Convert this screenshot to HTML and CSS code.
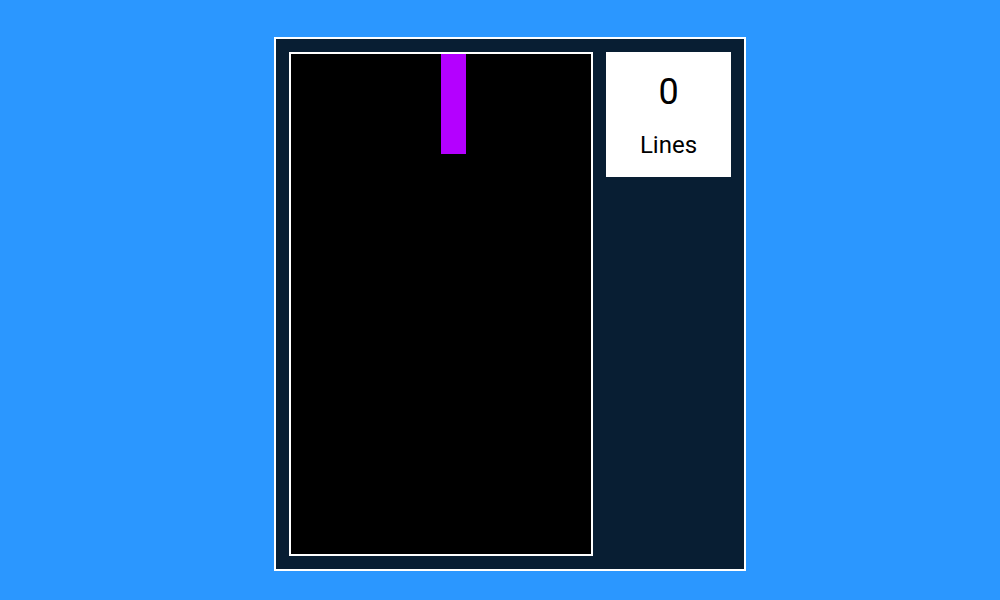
FILE: index.html
```html
<!DOCTYPE html>
<html>
<head>
<meta charset="utf-8">
<link rel="stylesheet" href="styles.css">
</head>
<body>
<div class="game">
  <div class="board">
    <div class="piece" style="left:150px;top:0;width:25px;height:100px"></div>
  </div>
  <div class="side">
    <div class="card">
      <div class="count">0</div>
      <div class="label">Lines</div>
    </div>
  </div>
</div>
</body>
</html>
```
FILE: styles.css
```css
html, body {
  margin: 0;
  padding: 0;
  background: #2b97ff;
  width: 1000px;
  height: 600px;
  overflow: hidden;
  font-family: Roboto, "Liberation Sans", sans-serif;
}
.game {
  margin: 37px 0 0 274px;
  box-sizing: content-box;
  border: 2px solid #ffffff;
  background: #081e33;
  padding: 13px;
  display: flex;
  gap: 13px;
  align-items: flex-start;
  width: 442px;
}
.board {
  position: relative;
  width: 300px;
  height: 500px;
  background: #000;
  border: 2px solid #fff;
  flex: none;
}
.piece {
  position: absolute;
  background: #b400ff;
}
.side {
  flex: none;
  width: 125px;
}
.card {
  width: 125px;
  height: 125px;
  background: #fff;
  color: #000;
  display: flex;
  flex-direction: column;
  align-items: center;
  box-sizing: border-box;
  padding-top: 20px;
}
.count {
  font-size: 36px;
  line-height: 40px;
}
.label {
  font-size: 24px;
  line-height: 28px;
  margin-top: 19px;
}
```
